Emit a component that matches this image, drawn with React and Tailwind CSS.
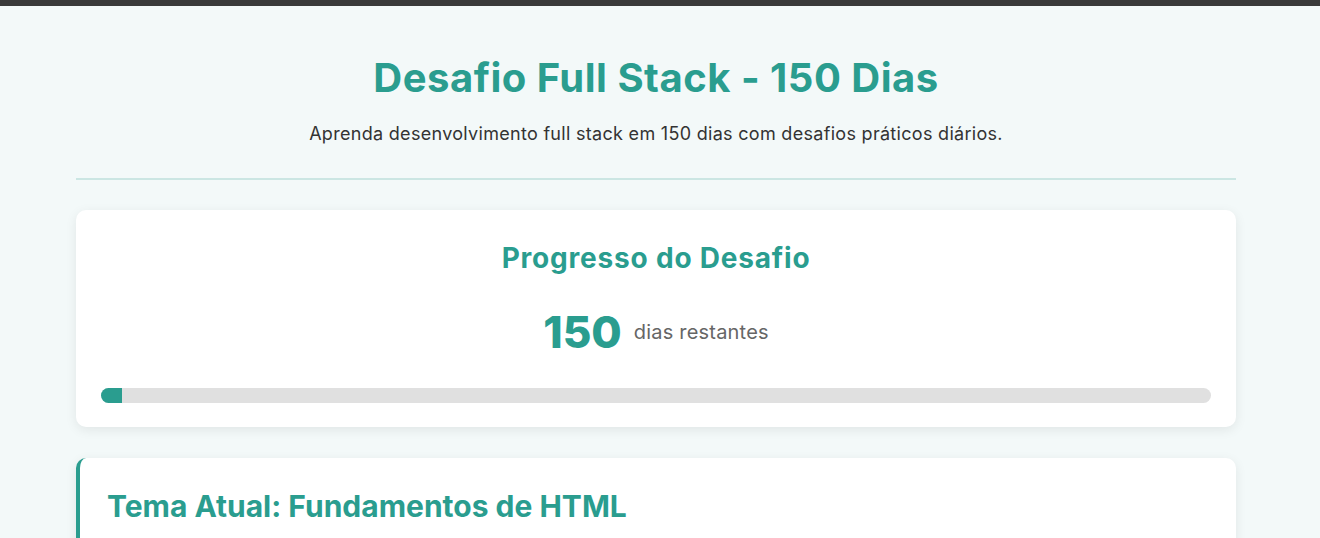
export default function App() {
  const totalDays = 150;
  const remaining = 150;

  return (
    <div className="min-h-screen bg-[#f3f9f9] font-['Inter','Noto_Sans',sans-serif] text-[#333]">
      <div className="h-[6px] bg-[#3a3a3a]" />
      <div className="w-[1312px]">
        <div className="mx-auto w-[1160px]">
          <header className="pt-[48px] pb-[32px] text-center border-b-2 border-[#cbe6e3]">
            <h1 className="text-[40px] leading-[48px] font-bold tracking-[0.5px] text-[#2a9d8f]">
              Desafio Full Stack - 150 Dias
            </h1>
            <p className="mt-[20px] text-[18px] leading-[24px] tracking-[0.3px] text-[#333]">
              Aprenda desenvolvimento full stack em 150 dias com desafios práticos diários.
            </p>
          </header>

          <section className="mt-[30px] bg-white rounded-[10px] shadow-[0_3px_12px_rgba(0,0,0,0.08)] px-[25px] pt-[30px] pb-[24px] text-center">
            <h2 className="text-[28px] leading-[36px] font-bold tracking-[0.8px] text-[#2a9d8f]">
              Progresso do Desafio
            </h2>
            <div className="mt-[26px] flex items-center justify-center gap-[12px]">
              <span className="text-[44px] leading-[60px] font-extrabold text-[#2a9d8f]">
                {remaining}
              </span>
              <span className="text-[20px] leading-[28px] tracking-[0.2px] text-[#666]">
                dias restantes
              </span>
            </div>
            <div className="mt-[26px] h-[15px] rounded-full bg-[#e0e0e0] overflow-hidden">
              <div
                className="h-full bg-[#2a9d8f]"
                style={{ width: `${Math.max(((totalDays - remaining) / totalDays) * 100, 1.9)}%` }}
              />
            </div>
          </section>

          <section className="mt-[31px] bg-white rounded-[10px] border-l-4 border-[#2a9d8f] shadow-[0_3px_12px_rgba(0,0,0,0.08)] px-[27px] pt-[28px] pb-[28px]">
            <h2 className="text-[30px] leading-[40px] font-bold text-[#2a9d8f]">
              Tema Atual: Fundamentos de HTML
            </h2>
          </section>
        </div>
      </div>
    </div>
  );
}
